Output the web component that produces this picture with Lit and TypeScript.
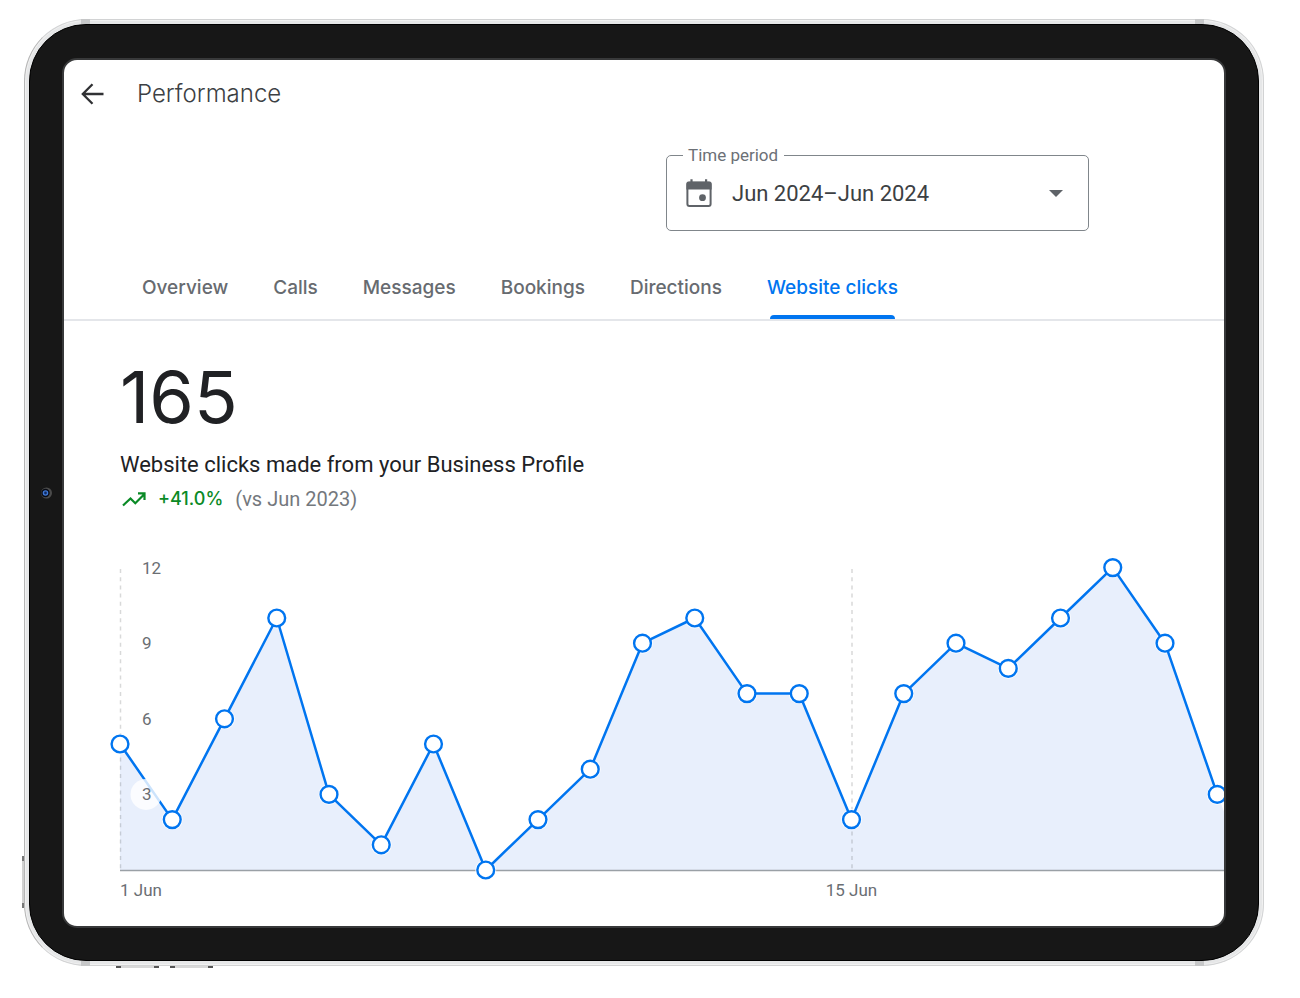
import { LitElement, html, svg, css } from "lit";
import { customElement, property, state } from "lit/decorators.js";
import { classMap } from "lit/directives/class-map.js";

@customElement("clicks-chart")
export class ClicksChart extends LitElement {
  @property({ attribute: false }) values: number[] = [];
  @property({ attribute: false }) ticks: number[] = [];
  @property({ attribute: false }) days: number[] = [];

  static styles = css`
    :host { display: block; overflow: hidden; }
    svg { display: block; }
    .area { fill: #e8effc; }
    .grid { stroke: #3c4043; stroke-opacity: 0.2; stroke-width: 1.5; stroke-dasharray: 4 4.2; }
    .axis { stroke: #9aa0a6; stroke-width: 1.5; }
    .line { fill: none; stroke: #0075f0; stroke-width: 2.5; stroke-linejoin: round; }
    .badge { fill: #fff; fill-opacity: 0.8; }
    .halo { fill: #fff; fill-opacity: 0.8; }
    .dot { fill: #fff; stroke: #0075f0; stroke-width: 2.4; }
    text { font: 400 17px Roboto, sans-serif; fill: #6a6e73; }
    .middle { text-anchor: middle; }
  `;

  private step = 52.25;
  private unit = 25.2;
  private left = 56;
  private base = 330;

  private x(i: number) { return this.left + i * this.step; }
  private y(v: number) { return this.base - v * this.unit; }

  render() {
    const pts = this.values.map((v, i) => `${this.x(i)},${this.y(v)}`).join(" ");
    const last = this.x(this.values.length - 1);
    const end = last + 30;
    const tail = `${end},${this.base}`;
    return html`<svg width=${end} height="386" role="img" aria-label="Website clicks per day">
      <polygon class="area" points="${this.left},${this.base} ${pts} ${tail}"></polygon>
      ${this.days.map((d) => svg`<line class="grid" x1=${this.x(d - 1) + 0.5} x2=${this.x(d - 1) + 0.5} y1="29" y2=${this.base}></line>`)}
      <line class="axis" x1=${this.left} x2=${end} y1=${this.base + 0.5} y2=${this.base + 0.5}></line>
      ${this.values.map((v, i) => svg`<circle class="halo" cx=${this.x(i)} cy=${this.y(v)} r="10.5"></circle>`)}
      <polyline class="line" points=${pts}></polyline>
      ${this.ticks.map((t) => svg`
        <circle class="badge" cx=${this.left + 26} cy=${this.y(t)} r="15.5"></circle>
        <text x=${this.left + 22} y=${this.y(t) + 6}>${t}</text>`)}
      ${this.values.map((v, i) => svg`<circle class="dot" cx=${this.x(i)} cy=${this.y(v)} r="8.4"></circle>`)}
      ${this.days.map((d, i) => svg`<text class=${i ? "middle" : ""} x=${this.x(d - 1)} y=${this.base + 26}>${d} Jun</text>`)}
    </svg>`;
  }
}

@customElement("app-root")
export class AppRoot extends LitElement {
  @state() private active = "Website clicks";

  private tabs = ["Overview", "Calls", "Messages", "Bookings", "Directions", "Website clicks"];
  private clicks = [5, 2, 6, 10, 3, 1, 5, 0, 2, 4, 9, 10, 7, 7, 2, 7, 9, 8, 10, 12, 9, 3];

  static styles = css`
    :host { display: block; box-sizing: border-box; background: #fff; padding: 19px 36px 31px 24px; font-family: Roboto, sans-serif; color: #202124; }
    * { box-sizing: border-box; }
    .device { position: relative; padding: 4px; border: 1px solid #d2d3d4; border-left-color: #b5b5b5; border-radius: 62px; background: #e6e7e8; box-shadow: inset 0 0 0 1px #f1f1f1; }
    .bezel { position: relative; border: 1px solid #000; border-radius: 57px; background: #171717; padding: 33px 32px 32px; }
    .screen { border: 2px solid #38393a; border-radius: 15px; background: #fff; overflow: hidden; }
    .seam { position: absolute; width: 9px; height: 5px; background: #c6c7c8; }
    .seam.top { top: -1px; }
    .seam.bottom { bottom: -1px; }
    .seam.left { left: 56px; }
    .seam.right { right: 59px; }
    .side { position: absolute; left: -3px; bottom: 57px; width: 2px; height: 52px; background: #d0d0d0; border-top: 5px solid #777; border-bottom: 5px solid #777; }
    .under { position: absolute; bottom: -3px; width: 43px; height: 2px; background: #d8d8d8; border-left: 5px solid #555; border-right: 5px solid #555; }
    .under.a { left: 91px; }
    .under.b { left: 145px; }
    .camera { position: absolute; left: 9px; top: 50%; width: 13px; height: 13px; transform: translateY(-50%); }

    header { display: flex; align-items: center; gap: 32px; height: 68px; padding: 0 16px; }
    .back { display: flex; padding: 0; border: 0; background: none; cursor: pointer; }
    h1 { margin: 0; font: 300 24px/32px Inter, sans-serif; color: #3c4043; }
    .filters { display: flex; justify-content: flex-end; padding: 17px 135px 0 24px; }
    fieldset { width: 423px; height: 86px; min-width: 0; margin: 0; padding: 0; border: 1px solid #80868b; border-radius: 5px; }
    legend { margin-left: 16px; padding: 0 6px 0 5px; font-size: 17px; line-height: 20px; color: #6c7076; }
    .field { display: grid; align-items: center; height: 56px; }
    .field > * { grid-area: 1 / 1; }
    .field svg { pointer-events: none; }
    .calendar { margin-left: 18px; }
    .caret { justify-self: end; margin-right: 25px; }
    select { width: 100%; height: 56px; padding: 0 48px 0 65px; border: 0; background: none; appearance: none; font: 400 22px Roboto, sans-serif; color: #3c4043; outline: 0; }
    nav { display: flex; gap: 45px; height: 81px; padding: 0 78px; margin-top: 9px; border-bottom: 2px solid #e4e6ea; }
    nav button { position: relative; flex: none; padding: 16px 0 0; border: 0; background: none; font: 500 19px/24px Inter, sans-serif; color: #676b70; white-space: nowrap; cursor: pointer; }
    nav .on { color: #0075f0; }
    nav .on::after { content: ""; position: absolute; left: 3px; right: 3px; bottom: 0; height: 4px; border-radius: 4px 4px 0 0; background: #0075f0; }
    .summary { padding: 36px 56px 0; }
    .total { font: 400 72px/80px Inter, sans-serif; color: #202124; }
    .caption { margin: 12px 0 0; font-size: 22px; line-height: 32px; color: #202124; }
    .trend { display: flex; align-items: center; gap: 12px; margin: 2px 0 0; font-size: 20px; line-height: 32px; color: #74787d; }
    .trend svg { margin-left: 2px; }
    .up { font: 500 18px/32px Inter, sans-serif; color: #0a8a26; }
    clicks-chart { margin-top: 25px; }
  `;

  render() {
    return html`
      <div class="device">
        <span class="seam top left"></span><span class="seam top right"></span>
        <span class="seam bottom left"></span><span class="seam bottom right"></span>
        <span class="side"></span><span class="under a"></span><span class="under b"></span>
        <div class="bezel">
          <svg class="camera" viewBox="0 0 13 13" aria-hidden="true">
            <circle cx="7.500" cy="6.500" r="5.500" fill="#4b4b4b"></circle>
            <circle cx="6.500" cy="6.500" r="4.200" fill="#080b14"></circle>
            <circle cx="6.500" cy="6.500" r="2.100" fill="#122a5c" stroke="#3f79d8" stroke-width="1.400"></circle>
          </svg>
          <main class="screen">
            <header>
              <button class="back" aria-label="Back">
                <svg width="25" height="24" viewBox="0 0 25 24" fill="none" stroke="#303134" stroke-width="2.300">
                  <path d="M23.500 12H3M12.500 2.200 2.800 12l9.700 9.800"></path>
                </svg>
              </button>
              <h1>Performance</h1>
            </header>
            <div class="filters">
              <fieldset>
                <legend><label for="period">Time period</label></legend>
                <div class="field">
                  <select id="period"><option>Jun 2024–Jun 2024</option></select>
                  <svg class="calendar" width="28" height="30" viewBox="0 0 28 30" aria-hidden="true">
                    <rect x="2.400" y="4.700" width="23.200" height="23.200" rx="2" fill="none" stroke="#5f6368" stroke-width="2"></rect>
                    <path d="M1.400 5.500a2 2 0 0 1 2-2h21.200a2 2 0 0 1 2 2v6H1.400zM5.400 1.200h2.200v3H5.400zM20 1.200h2.200v3h-2.200z" fill="#5f6368"></path>
                    <circle cx="17.500" cy="19.700" r="3.400" fill="#5f6368"></circle>
                  </svg>
                  <svg class="caret" width="14" height="7" viewBox="0 0 14 7" aria-hidden="true"><path d="M0 0h14L7 7z" fill="#5f6368"></path></svg>
                </div>
              </fieldset>
            </div>
            <nav role="tablist">
              ${this.tabs.map((t) => html`<button role="tab" aria-selected=${t === this.active} class=${classMap({ on: t === this.active })} @click=${() => (this.active = t)}>${t}</button>`)}
            </nav>
            <section class="summary">
              <div class="total">165</div>
              <p class="caption">Website clicks made from your Business Profile</p>
              <p class="trend">
                <svg width="24" height="15" viewBox="0 0 24 15" fill="none" stroke="#0a8a26" stroke-width="2.200" aria-hidden="true">
                  <path d="M1 13.500 8.500 6.500l4.800 4.800L22 2.500M16 1.300h6.500V8"></path>
                </svg>
                <span class="up">+41.0%</span><span>(vs Jun 2023)</span>
              </p>
            </section>
            <clicks-chart .values=${this.clicks} .ticks=${[12, 9, 6, 3]} .days=${[1, 15]}></clicks-chart>
          </main>
        </div>
      </div>`;
  }
}
